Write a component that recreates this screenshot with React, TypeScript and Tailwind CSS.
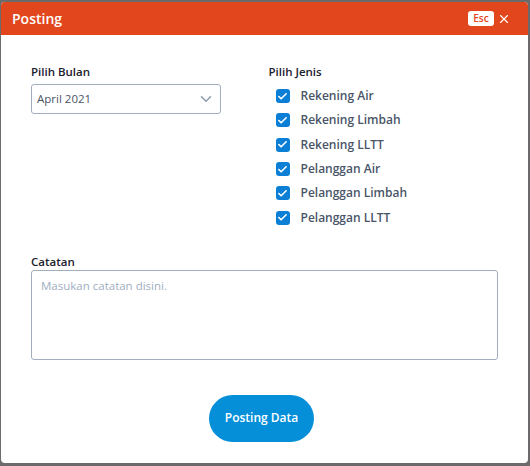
import { Check, ChevronDown, X } from 'lucide-react';

const jenis = [
  'Rekening Air',
  'Rekening Limbah',
  'Rekening LLTT',
  'Pelanggan Air',
  'Pelanggan Limbah',
  'Pelanggan LLTT',
];

function Checkbox({ label }: { label: string }) {
  return (
    <label className="flex items-center h-[24.3px] pl-[7px]">
      <span className="w-[14px] h-[14px] rounded-[3px] bg-[#0b7fd6] flex items-center justify-center">
        <Check size={11} strokeWidth={3.5} className="text-white" />
      </span>
      <span className="ml-[11px] text-[12px] font-semibold text-[#4a5568]">{label}</span>
    </label>
  );
}

export default function App() {
  return (
    <div
      className="w-[530px] h-[466px] bg-[#6b6b6b] overflow-hidden"
      style={{ fontFamily: '"Open Sans", "Noto Sans", sans-serif' }}
    >
      <div className="ml-[1px] mt-[2px] w-[527px] h-[461px] bg-white rounded-[4px] flex flex-col">
        <div className="h-[33px] bg-[#e2461c] rounded-t-[4px] flex items-center justify-between pl-[11px] pr-[17px]">
          <h3 className="text-[14px] font-semibold text-white">Posting</h3>
          <div className="flex items-center gap-[3px]">
            <span className="h-[15px] w-[26px] text-center rounded-[3px] bg-white text-[#e2461c] text-[10px] font-semibold leading-[15px]">
              Esc
            </span>
            <X size={14} strokeWidth={2} className="text-white" />
          </div>
        </div>

        <div className="px-[30px] pt-[29px] flex-1 flex flex-col">
          <div className="grid grid-cols-2 gap-x-2">
            <div>
              <div className="text-[11.5px] font-semibold text-[#1a202c] leading-[16px]">Pilih Bulan</div>
              <div className="mt-[4px] w-[190px] h-[30px] border border-[#a0aec0] rounded-[3px] flex items-center justify-between pl-[5px] pr-[5px]">
                <span className="text-[11.5px] text-[#4a5568]">April 2021</span>
                <ChevronDown size={18} strokeWidth={2} className="text-[#8f9bad]" />
              </div>
            </div>
            <div>
              <div className="text-[11.5px] font-semibold text-[#1a202c] leading-[16px]">Pilih Jenis</div>
              <div className="mt-[4px] flex flex-col">
                {jenis.map((j) => (
                  <Checkbox key={j} label={j} />
                ))}
              </div>
            </div>
          </div>

          <div className="mt-[24px]">
            <div className="text-[11.5px] font-semibold text-[#1a202c] leading-[16px]">Catatan</div>
            <div className="w-[467px] h-[90px] border border-[#a0aec0] rounded-[3px] px-[9px] pt-[1px]">
              <span className="text-[11.5px] text-[#a0aec0]">Masukan catatan disini.</span>
            </div>
          </div>

          <div className="flex justify-center mt-[35px] pr-[6px]">
            <button className="w-[105px] h-[47px] rounded-full bg-[#068fd9] text-white text-[12px] font-semibold">
              Posting Data
            </button>
          </div>
        </div>
      </div>
    </div>
  );
}
